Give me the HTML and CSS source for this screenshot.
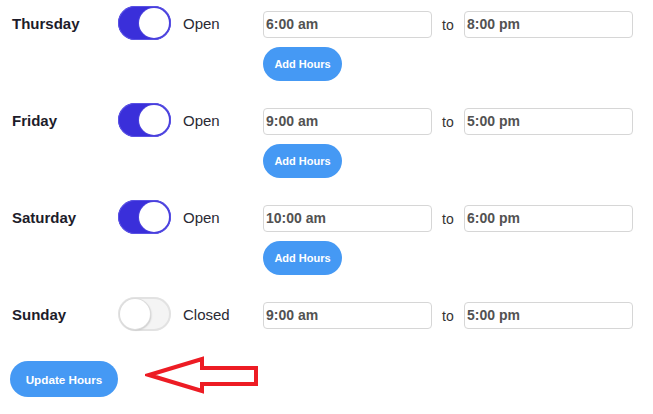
FILE: index.html
```html
<!DOCTYPE html>
<html>
<head>
<meta charset="utf-8">
<link rel="stylesheet" href="styles.css">
</head>
<body>
<div class="page">
  <div class="day">
    <div class="label">Thursday</div>
    <div class="toggle on"><span class="knob"></span></div>
    <div class="status">Open</div>
    <div class="time">6:00 am</div>
    <div class="to">to</div>
    <div class="time">8:00 pm</div>
    <button class="add">Add Hours</button>
  </div>
  <div class="day">
    <div class="label">Friday</div>
    <div class="toggle on"><span class="knob"></span></div>
    <div class="status">Open</div>
    <div class="time">9:00 am</div>
    <div class="to">to</div>
    <div class="time">5:00 pm</div>
    <button class="add">Add Hours</button>
  </div>
  <div class="day">
    <div class="label">Saturday</div>
    <div class="toggle on"><span class="knob"></span></div>
    <div class="status">Open</div>
    <div class="time">10:00 am</div>
    <div class="to">to</div>
    <div class="time">6:00 pm</div>
    <button class="add">Add Hours</button>
  </div>
  <div class="day last">
    <div class="label">Sunday</div>
    <div class="toggle off"><span class="knob"></span></div>
    <div class="status">Closed</div>
    <div class="time">9:00 am</div>
    <div class="to">to</div>
    <div class="time">5:00 pm</div>
  </div>
  <div class="footer">
    <button class="update">Update Hours</button>
    <svg class="arrow" width="116" height="44" viewBox="0 0 116 44">
      <polygon points="4,21 57,5 57,14 111,14 111,30 57,30 57,37" fill="none" stroke="#ed1c24" stroke-width="4" stroke-linejoin="miter"/>
    </svg>
  </div>
</div>
</body>
</html>
```
FILE: styles.css
```css
* { box-sizing: border-box; }
html, body { margin: 0; padding: 0; background: #fff; }
body { font-family: "Liberation Sans", Arial, sans-serif; }
.page { padding: 11px 0 0 0; width: 653px; }
.day {
  display: grid;
  grid-template-columns: 12px 106px 53px 12px 80px 169px 32px 169px;
  grid-template-rows: 27px 34px;
  row-gap: 9px;
  margin-bottom: 27px;
}
.day.last { grid-template-rows: 27px; margin-bottom: 0; }
.label {
  grid-column: 2; grid-row: 1;
  align-self: center;
  font-weight: bold; font-size: 15px; color: #1d1c2a;
  margin-top: -2px;
}
.toggle {
  grid-column: 3; grid-row: 1;
  align-self: center;
  width: 53px; height: 34px; border-radius: 17px;
  position: relative;
  margin-top: -3px;
}
.toggle.on { background: #3a2fda; box-shadow: inset 0 0 0 1px #5a52e4; }
.toggle.off { background: #f4f4f4; box-shadow: inset 0 0 0 2px #e2e2e2; }
.knob {
  position: absolute; top: 2px; width: 30px; height: 30px; border-radius: 50%;
  background: #fff;
}
.toggle.on .knob { right: 2px; box-shadow: 0 0 0 1px #4b41dc; }
.toggle.off .knob { left: 2px; box-shadow: 0 0 0 1px #dcdcdc, 1px 1px 2px rgba(0,0,0,0.25); }
.status {
  grid-column: 5; grid-row: 1; align-self: center;
  font-size: 15px; color: #2a2a33; margin-top: -2px;
}
.time {
  grid-row: 1;
  border: 1px solid #d6d6d6; border-radius: 4px;
  font-weight: bold; font-size: 14px; color: #525252;
  padding-left: 2px; line-height: 25px;
}
.day .time:nth-of-type(4) { grid-column: 6; }
.day .time:nth-of-type(6) { grid-column: 8; }
.to {
  grid-column: 7; grid-row: 1; align-self: center;
  font-size: 14px; color: #333; padding-left: 10px;
}
.add {
  grid-column: 6; grid-row: 2; justify-self: start;
  width: 79px; height: 34px; border: none; border-radius: 17px;
  background: #4599f4; color: #fff;
  font-family: "Liberation Sans", Arial, sans-serif;
  font-weight: bold; font-size: 11px; padding: 0;
}
.footer {
  display: flex; align-items: center;
  margin-top: 31px; padding-left: 10px;
}
.update {
  width: 108px; height: 36px; border: none; border-radius: 18px;
  background: #4599f4; color: #fff;
  font-family: "Liberation Sans", Arial, sans-serif;
  font-weight: bold; font-size: 11.7px; padding: 0;
}
.arrow { margin-left: 27px; margin-top: -6px; }
```
